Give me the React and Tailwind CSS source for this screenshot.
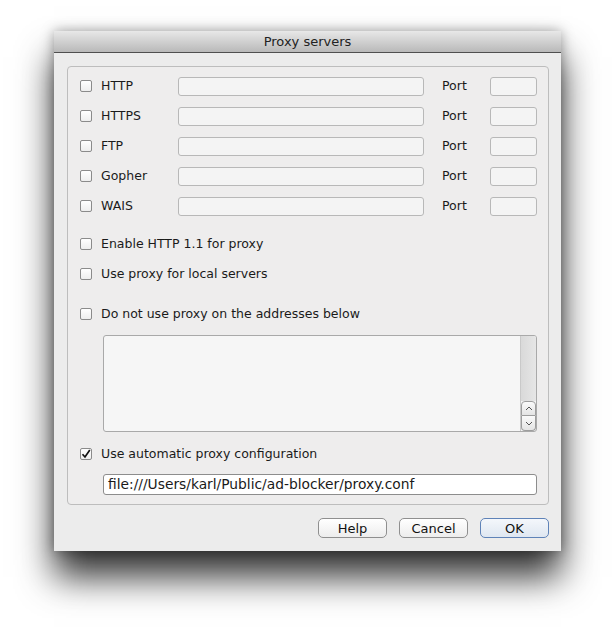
import React from 'react';

const font = { fontFamily: '"DejaVu Sans", "Liberation Sans", sans-serif' };

const Checkbox = ({ checked }) => (
  <span className="flex h-[12px] w-[12px] shrink-0 items-center justify-center rounded-[2px] border border-[#8b8b8b] bg-gradient-to-b from-[#ffffff] to-[#eeeeee]">
    {checked && (
      <svg width="10" height="10" viewBox="0 0 10 10">
        <path d="M1.5 5.2 L4 8 L8.8 1" fill="none" stroke="#111" strokeWidth="1.7" />
      </svg>
    )}
  </span>
);

const Field = ({ className }) => (
  <div className={`h-[19px] rounded-[3px] border border-[#b8b8b8] bg-[#f4f4f4] ${className}`} />
);

const protocols = ['HTTP', 'HTTPS', 'FTP', 'Gopher', 'WAIS'];

const Button = ({ label, primary }) => (
  <button
    className={`h-[20px] w-[69px] rounded-[5px] border text-[13px] leading-none text-[#111] ${
      primary
        ? 'border-[#5f83b8] bg-gradient-to-b from-[#f4f7fb] to-[#dfe7f1]'
        : 'border-[#8f8f8f] bg-gradient-to-b from-[#ffffff] to-[#ededed]'
    }`}
  >
    {label}
  </button>
);

const Option = ({ label, checked, className }) => (
  <label className={`flex h-[16px] items-center leading-[16px] ${className}`}>
    <Checkbox checked={checked} />
    <span className="ml-[9px]">{label}</span>
  </label>
);

export default function App() {
  return (
    <div className="h-[627px] w-[615px] bg-white pl-[54px] pt-[31px]" style={font}>
      <div className="flex h-[520px] w-[507px] flex-col bg-[#ececec] shadow-[0_26px_34px_rgba(0,0,0,0.8),0_0_12px_rgba(0,0,0,0.35)]">
        {/* title bar */}
        <div className="flex h-[22px] shrink-0 items-center justify-center border-b border-[#4f4f4f] bg-gradient-to-b from-[#e8e8e8] to-[#b9b9b9] text-[13px] text-[#222]">
          Proxy servers
        </div>

        {/* group box */}
        <div className="ml-[13px] mt-[13px] flex h-[439px] w-[482px] flex-col rounded-[4px] border border-[#bdbdbd] bg-[#eeeded] pl-[12px] pr-[11px] pt-[9px] text-[12.5px] text-[#1a1a1a]">
          <div className="flex flex-col gap-[11px]">
            {protocols.map((p) => (
              <div key={p} className="flex h-[19px] items-center pt-[1px]">
                <Checkbox />
                <span className="ml-[9px] w-[77px]">{p}</span>
                <Field className="w-[246px]" />
                <span className="ml-[18px] w-[48px]">Port</span>
                <Field className="w-[47px]" />
              </div>
            ))}
          </div>

          <Option label="Enable HTTP 1.1 for proxy" className="mt-[21px]" />
          <Option label="Use proxy for local servers" className="mt-[14px]" />
          <Option label="Do not use proxy on the addresses below" className="mt-[24px]" />

          {/* address list */}
          <div className="ml-[23px] mt-[13px] flex h-[97px] w-[434px] shrink-0 overflow-hidden rounded-[3px] border border-[#a9a9a9] bg-[#f6f6f6]">
            <div className="flex-1" />
            <div className="flex w-[16px] flex-col border-l border-[#c9c9c9]">
              <div className="flex-1 bg-gradient-to-r from-[#d9d9d9] to-[#e6e6e6]" />
              <div className="flex h-[15px] items-center justify-center rounded-t-[4px] border border-[#9d9d9d] bg-gradient-to-b from-[#fafafa] to-[#e4e4e4]">
                <svg width="8" height="5" viewBox="0 0 8 5">
                  <path d="M1 4 L4 1 L7 4" fill="none" stroke="#555" strokeWidth="1" />
                </svg>
              </div>
              <div className="flex h-[15px] items-center justify-center rounded-b-[4px] border border-t-0 border-[#9d9d9d] bg-gradient-to-b from-[#fafafa] to-[#e4e4e4]">
                <svg width="8" height="5" viewBox="0 0 8 5">
                  <path d="M1 1 L4 4 L7 1" fill="none" stroke="#555" strokeWidth="1" />
                </svg>
              </div>
            </div>
          </div>

          <Option label="Use automatic proxy configuration" checked className="mt-[14px]" />

          <div className="ml-[23px] mt-[12px] flex h-[21px] w-[434px] shrink-0 items-center rounded-[3px] border border-[#8d8d8d] bg-white pl-[4px] text-[13.8px]">
            file:///Users/karl/Public/ad-blocker/proxy.conf
          </div>
        </div>

        {/* buttons */}
        <div className="mr-[12px] mt-[13px] flex justify-end gap-[12px]">
          <Button label="Help" />
          <Button label="Cancel" />
          <Button label="OK" primary />
        </div>
      </div>
    </div>
  );
}
